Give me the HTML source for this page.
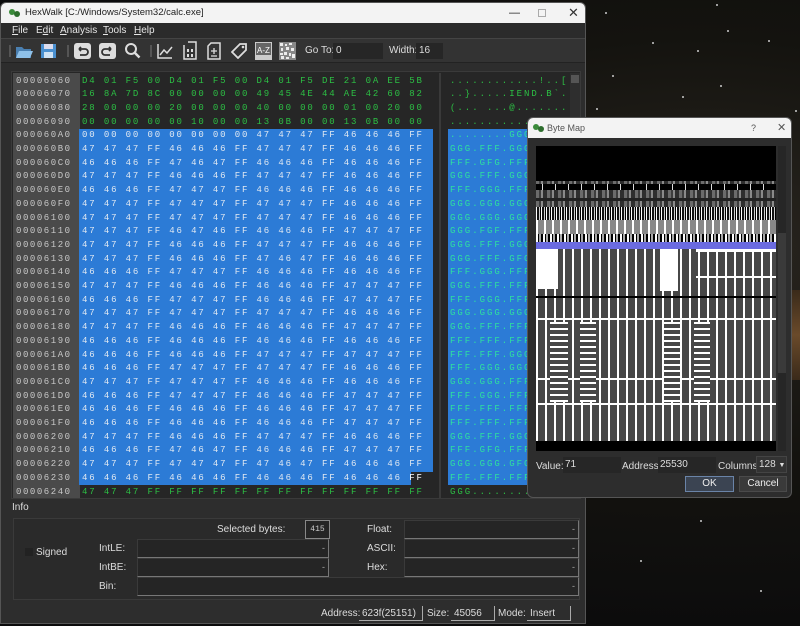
<!DOCTYPE html>
<html><head><meta charset="utf-8"><style>
*{margin:0;padding:0;box-sizing:border-box}
body{width:800px;height:626px;overflow:hidden;position:relative;background:radial-gradient(ellipse at 700px 250px,#2a2620 0%,#14130f 40%,#0b0b0c 75%);font-family:"Liberation Sans",sans-serif;font-size:10px;color:#ddd}
.a{position:absolute}
.win{left:0;top:2px;width:586px;height:622px;background:#2d2d2d;border:1px solid #555;border-radius:6px 6px 0 0;overflow:hidden}
.title{left:0;top:0;width:586px;height:20px;background:#f3f3f3;color:#222;font-size:9.5px;line-height:20px}
.mono{font-family:"Liberation Mono",monospace;font-size:9px;letter-spacing:1.87px;white-space:pre;line-height:13.7px}
.fld{background:#252525;border:1px solid #777;border-top-color:#3a3a3a;border-left-color:#3a3a3a;text-align:right;padding-right:3px;color:#aaa;line-height:16px;font-size:9px}
.lbl{color:#ddd;font-size:10px}
.star{position:absolute;width:2px;height:2px;background:#ccc;border-radius:1px}
</style></head><body>
<div class="star" style="left:716px;top:4px"></div><div class="star" style="left:605px;top:12px"></div><div class="star" style="left:652px;top:42px"></div><div class="star" style="left:697px;top:50px"></div><div class="star" style="left:727px;top:30px"></div><div class="star" style="left:768px;top:40px"></div><div class="star" style="left:612px;top:75px"></div><div class="star" style="left:682px;top:96px"></div><div class="star" style="left:720px;top:85px"></div><div class="star" style="left:795px;top:110px"></div><div class="star" style="left:596px;top:108px"></div><div class="star" style="left:760px;top:590px"></div><div class="star" style="left:640px;top:560px"></div><div class="star" style="left:700px;top:520px"></div>
<div class="a" style="left:786px;top:290px;width:14px;height:90px;background:linear-gradient(#3a2a1a,#6a4a2a,#3a2a1a)"></div>

<div class="a win">
 <div class="a title">
  <svg class="a" style="left:8px;top:5px" width="12" height="10"><circle cx="3" cy="4" r="3" fill="#3a8a3a"/><circle cx="8" cy="6" r="3" fill="#2d6d2d"/></svg>
  <span class="a" style="left:24px;top:0">HexWalk [C:/Windows/System32/calc.exe]</span>
  <span class="a" style="left:508px;top:0;font-size:11px">&#8212;</span>
  <span class="a" style="left:537px;top:6px;width:8px;height:8px;border:1px solid #aaa"></span>
  <span class="a" style="left:567px;top:0;font-size:13px;color:#333">&#10005;</span>
 </div>
 <div class="a" style="left:0;top:20px;width:586px;height:15px;background:#2b2b2b;font-size:10px;line-height:15px;color:#e6e6e6">
  <span class="a" style="left:11px"><u>F</u>ile</span><span class="a" style="left:35px">E<u>d</u>it</span><span class="a" style="left:59px"><u>A</u>nalysis</span><span class="a" style="left:102px"><u>T</u>ools</span><span class="a" style="left:133px"><u>H</u>elp</span>
 </div>
 <div class="a" style="left:0;top:35px;width:586px;height:25px;background:#333;border-top:1px solid #444;border-bottom:1px solid #222">
  <div class="a" style="left:8px;top:6px;width:2px;height:12px;background:#555"></div>
  <svg class="a" style="left:14px;top:3px" width="18" height="18"><path d="M1 5h6l2 2h7v9H1z" fill="#4a7fb0"/><path d="M4 9h14l-3 7H1z" fill="#8ec0e8"/></svg>
  <svg class="a" style="left:39px;top:4px" width="17" height="16"><rect x="1" y="1" width="15" height="14" fill="#4a90d0"/><rect x="4" y="1" width="9" height="5" fill="#dde"/><rect x="4" y="9" width="9" height="6" fill="#cfe3f5"/></svg>
  <div class="a" style="left:66px;top:6px;width:2px;height:12px;background:#555"></div>
  <svg class="a" style="left:73px;top:4px" width="17" height="16"><rect x="0" y="0" width="17" height="16" rx="3" fill="#ddd"/><path d="M5 6h6a3 3 0 0 1 0 6H6M5 6l2-2M5 6l2 2" stroke="#333" stroke-width="1.8" fill="none"/></svg>
  <svg class="a" style="left:98px;top:4px" width="17" height="16"><rect x="0" y="0" width="17" height="16" rx="3" fill="#ddd"/><path d="M12 6H6a3 3 0 0 0 0 6h5M12 6l-2-2M12 6l-2 2" stroke="#333" stroke-width="1.8" fill="none"/></svg>
  <svg class="a" style="left:123px;top:3px" width="17" height="18"><circle cx="7" cy="7" r="5" stroke="#ddd" stroke-width="2" fill="none"/><path d="M10.5 10.5l5 5" stroke="#ddd" stroke-width="2.5"/></svg>
  <div class="a" style="left:149px;top:6px;width:2px;height:12px;background:#555"></div>
  <svg class="a" style="left:156px;top:4px" width="16" height="16"><path d="M1 1v14h14" stroke="#ddd" fill="none" stroke-width="1.5"/><path d="M3 12l4-5 3 3 5-6" stroke="#ddd" fill="none" stroke-width="1.5"/></svg>
  <svg class="a" style="left:181px;top:2px" width="16" height="19"><path d="M2 4v14h12V1H6" stroke="#ddd" fill="none" stroke-width="1.5"/><rect x="5" y="8" width="2" height="3" fill="#ddd"/><rect x="9" y="8" width="2" height="3" fill="#ddd"/><rect x="5" y="13" width="2" height="3" fill="#ddd"/><rect x="9" y="13" width="2" height="3" fill="#ddd"/></svg>
  <svg class="a" style="left:206px;top:3px" width="14" height="18"><path d="M1 4v13h12V1H4z" stroke="#ddd" fill="none" stroke-width="1.5"/><path d="M7 6v6M4 9h6M4 14h6" stroke="#ddd" stroke-width="1.3"/></svg>
  <svg class="a" style="left:230px;top:4px" width="17" height="16"><path d="M9 1h6v6l-8 8-6-6z" stroke="#ddd" fill="none" stroke-width="1.8"/><circle cx="12" cy="4" r="1.3" fill="#ddd"/></svg>
  <svg class="a" style="left:254px;top:3px" width="17" height="18"><rect x="0" y="0" width="17" height="18" fill="#ccc"/><rect x="1" y="1" width="15" height="12" fill="#666"/><text x="2" y="11" font-size="8" fill="#fff" font-family="Liberation Sans">A-Z</text></svg>
  <svg class="a" style="left:278px;top:3px" width="17" height="18"><rect width="17" height="18" fill="#888"/><path d="M1 1h3v3H1zM6 2h2v2H6zM10 1h3v2h-3zM2 6h2v3H2zM7 5h3v3H7zM12 6h3v3h-3zM1 11h3v2H1zM5 10h3v3H5zM10 11h2v3h-2zM13 12h3v4h-3zM2 14h3v3H2zM7 15h3v2H7z" fill="#eee"/></svg>
  <span class="a" style="left:304px;top:6px;color:#ddd">Go To:</span>
  <div class="a" style="left:332px;top:4px;width:50px;height:16px;background:#262626;padding-left:3px;line-height:16px;color:#ddd">0</div>
  <span class="a" style="left:388px;top:6px;color:#ddd">Width:</span>
  <div class="a" style="left:415px;top:4px;width:27px;height:16px;background:#262626;padding-left:3px;line-height:16px;color:#ddd">16</div>
 </div>

 <div class="a" style="left:10px;top:68px;width:570px;height:428px;background:#262626;border:1px solid #3a3a3a"></div>
 <div class="a" style="left:12px;top:70px;width:67px;height:425px;background:#4a4a4a"></div>
 <div class="a" style="left:78px;top:126.3px;width:354px;height:356.2px;background:#2c7bd6"></div>
 <div class="a" style="left:410px;top:468.8px;width:22px;height:13.7px;background:#262626"></div>
 <div class="a" style="left:438px;top:70px;width:2px;height:425px;background:#3a3a3a"></div>
 <div class="a" style="left:447px;top:126.3px;width:82px;height:356.2px;background:#2c7bd6"></div>
 <div class="a" style="left:569px;top:70px;width:10px;height:425px;background:#2e2e2e"></div>
 <div class="a" style="left:570px;top:72px;width:8px;height:8px;background:#555"></div>

 <div class="a mono" style="left:15px;top:71.5px;color:#c8c8c8;letter-spacing:1.55px">00006060
00006070
00006080
00006090
000060A0
000060B0
000060C0
000060D0
000060E0
000060F0
00006100
00006110
00006120
00006130
00006140
00006150
00006160
00006170
00006180
00006190
000061A0
000061B0
000061C0
000061D0
000061E0
000061F0
00006200
00006210
00006220
00006230
00006240</div>
 <div class="a mono" style="left:81px;top:71.5px;color:#2cbf44">D4 01 F5 00 D4 01 F5 00 D4 01 F5 DE 21 0A EE 5B
16 8A 7D 8C 00 00 00 00 49 45 4E 44 AE 42 60 82
28 00 00 00 20 00 00 00 40 00 00 00 01 00 20 00
00 00 00 00 00 10 00 00 13 0B 00 00 13 0B 00 00</div>
 <div class="a mono" style="left:81px;top:126.3px;color:#dfe8f2">00 00 00 00 00 00 00 00 47 47 47 FF 46 46 46 FF
47 47 47 FF 46 46 46 FF 47 47 47 FF 46 46 46 FF
46 46 46 FF 47 46 47 FF 46 46 46 FF 46 46 46 FF
47 47 47 FF 46 46 46 FF 47 47 47 FF 46 46 46 FF
46 46 46 FF 47 47 47 FF 46 46 46 FF 46 46 46 FF
47 47 47 FF 47 47 47 FF 47 47 47 FF 46 46 46 FF
47 47 47 FF 47 47 47 FF 47 47 47 FF 46 46 46 FF
47 47 47 FF 46 47 46 FF 46 46 46 FF 47 47 47 FF
47 47 47 FF 46 46 46 FF 47 47 47 FF 46 46 46 FF
47 47 47 FF 46 46 46 FF 47 46 47 FF 46 46 46 FF
46 46 46 FF 47 47 47 FF 46 46 46 FF 46 46 46 FF
47 47 47 FF 46 46 46 FF 46 46 46 FF 47 47 47 FF
46 46 46 FF 47 47 47 FF 46 46 46 FF 47 47 47 FF
47 47 47 FF 47 47 47 FF 47 47 47 FF 46 46 46 FF
47 47 47 FF 46 46 46 FF 46 46 46 FF 47 47 47 FF
46 46 46 FF 46 46 46 FF 46 46 46 FF 46 46 46 FF
46 46 46 FF 46 46 46 FF 47 47 47 FF 47 47 47 FF
46 46 46 FF 47 47 47 FF 47 47 47 FF 46 46 46 FF
47 47 47 FF 47 47 47 FF 46 46 46 FF 46 46 46 FF
46 46 46 FF 47 47 47 FF 46 46 46 FF 47 47 47 FF
46 46 46 FF 46 46 46 FF 46 46 46 FF 47 47 47 FF
46 46 46 FF 46 46 46 FF 46 46 46 FF 47 47 47 FF
47 47 47 FF 46 46 46 FF 47 47 47 FF 46 46 46 FF
46 46 46 FF 47 46 47 FF 46 46 46 FF 47 47 47 FF
47 47 47 FF 47 47 47 FF 47 46 47 FF 46 46 46 FF
46 46 46 FF 46 46 46 FF 46 46 46 FF 46 46 46 <span style="color:#fff">FF</span></div>
 <div class="a mono" style="left:81px;top:482.5px;color:#2cbf44">47 47 47 FF FF FF FF FF FF FF FF FF FF FF FF FF</div>

 <div class="a mono" style="left:449px;top:71.5px;color:#2cbf44;letter-spacing:2.0px">............!..[
..}.....IEND.B`.
(... ...@.......
................</div>
 <div class="a mono" style="left:449px;top:126.3px;color:#2ee0a0;letter-spacing:2.0px">........GGG.FFF.
GGG.FFF.GGG.FFF.
FFF.GFG.FFF.FFF.
GGG.FFF.GGG.FFF.
FFF.GGG.FFF.FFF.
GGG.GGG.GGG.FFF.
GGG.GGG.GGG.FFF.
GGG.FGF.FFF.GGG.
GGG.FFF.GGG.FFF.
GGG.FFF.GFG.FFF.
FFF.GGG.FFF.FFF.
GGG.FFF.FFF.GGG.
FFF.GGG.FFF.GGG.
GGG.GGG.GGG.FFF.
GGG.FFF.FFF.GGG.
FFF.FFF.FFF.FFF.
FFF.FFF.GGG.GGG.
FFF.GGG.GGG.FFF.
GGG.GGG.FFF.FFF.
FFF.GGG.FFF.GGG.
FFF.FFF.FFF.GGG.
FFF.FFF.FFF.GGG.
GGG.FFF.GGG.FFF.
FFF.GFG.FFF.GGG.
GGG.GGG.GFG.FFF.
FFF.FFF.FFF.FFF.</div>
 <div class="a mono" style="left:449px;top:482.5px;color:#2cbf44;letter-spacing:2.0px">GGG.............</div>

 <div class="a" style="left:0;top:496px;width:586px;height:130px;background:#2d2d2d"></div>
 <span class="a lbl" style="left:11px;top:499px">Info</span>
 <div class="a" style="left:12px;top:515px;width:567px;height:82px;border:1px solid #3a3a3a;background:#2a2a2a"></div>
 <span class="a lbl" style="left:216px;top:521px">Selected bytes:</span>
 <div class="a fld" style="left:304px;top:517px;width:25px;height:19px;text-align:center;padding:0;font-family:'Liberation Mono',monospace;font-size:8px;line-height:18px;border-color:#888;color:#ccc">415</div>
 <span class="a lbl" style="left:366px;top:521px">Float:</span>
 <div class="a fld" style="left:403px;top:517px;width:175px;height:19px">-</div>
 <div class="a" style="left:24px;top:545px;width:8px;height:8px;background:#222"></div>
 <span class="a lbl" style="left:35px;top:544px">Signed</span>
 <span class="a lbl" style="left:98px;top:540px">IntLE:</span>
 <div class="a fld" style="left:136px;top:536px;width:192px;height:19px">-</div>
 <span class="a lbl" style="left:366px;top:540px">ASCII:</span>
 <div class="a fld" style="left:403px;top:536px;width:175px;height:19px">-</div>
 <span class="a lbl" style="left:98px;top:559px">IntBE:</span>
 <div class="a fld" style="left:136px;top:555px;width:192px;height:19px">-</div>
 <span class="a lbl" style="left:366px;top:559px">Hex:</span>
 <div class="a fld" style="left:403px;top:555px;width:175px;height:19px">-</div>
 <span class="a lbl" style="left:98px;top:578px">Bin:</span>
 <div class="a fld" style="left:136px;top:574px;width:442px;height:19px">-</div>

 <span class="a lbl" style="left:320px;top:605px">Address:</span>
 <div class="a" style="left:358px;top:603px;width:64px;height:15px;border-bottom:1px solid #aaa;border-right:1px solid #aaa;padding-left:3px;line-height:15px;color:#ddd">623f(25151)</div>
 <span class="a lbl" style="left:426px;top:605px">Size:</span>
 <div class="a" style="left:450px;top:603px;width:44px;height:15px;border-bottom:1px solid #aaa;border-right:1px solid #aaa;padding-left:3px;line-height:15px;color:#ddd">45056</div>
 <span class="a lbl" style="left:497px;top:605px">Mode:</span>
 <div class="a" style="left:526px;top:603px;width:44px;height:15px;border-bottom:1px solid #aaa;border-right:1px solid #aaa;padding-left:3px;line-height:15px;color:#ddd">Insert</div>
</div>

<div class="a" style="left:527px;top:117px;width:265px;height:381px;background:#2d2d2d;border:1px solid #555;border-radius:6px;overflow:hidden">
 <div class="a" style="left:0;top:0;width:265px;height:20px;background:#f3f3f3;color:#555;font-size:9px;line-height:20px">
  <svg class="a" style="left:5px;top:5px" width="12" height="10"><circle cx="3" cy="4" r="3" fill="#3a8a3a"/><circle cx="8" cy="6" r="3" fill="#2d6d2d"/></svg>
  <span class="a" style="left:19px">Byte Map</span>
  <span class="a" style="left:223px">?</span>
  <span class="a" style="left:249px;font-size:11px">&#10005;</span>
 </div>
 <div class="a" style="left:8px;top:28px;width:240px;height:305px;background:#000;overflow:hidden">
  <div class="a" style="left:0;top:35px;width:240px;height:26px;background:repeating-linear-gradient(90deg,#777 0 3px,#444 3px 5px,#999 5px 7px,#333 7px 11px),#555;opacity:.9"></div>
  <div class="a" style="left:0;top:38px;width:240px;height:6px;background:repeating-linear-gradient(90deg,#000 0 6px,#ddd 6px 7px,#000 7px 13px)"></div>
  <div class="a" style="left:0;top:52px;width:240px;height:3px;background:#222"></div>
  <div class="a" style="left:0;top:61px;width:240px;height:13px;background:repeating-linear-gradient(90deg,#fff 0 1px,#111 1px 3px,#ccc 3px 4px,#000 4px 5px)"></div>
  <div class="a" style="left:0;top:74px;width:240px;height:14px;background:repeating-linear-gradient(90deg,#fff 0 2px,#888 2px 8px)"></div>
  <div class="a" style="left:0;top:88px;width:240px;height:8px;background:repeating-linear-gradient(90deg,#fff 0 2px,#000 2px 3px,#aaa 3px 5px,#000 5px 7px)"></div>
  <div class="a" style="left:0;top:96px;width:240px;height:7px;background:#6b6be0"></div>
  <div class="a" style="left:0;top:103px;width:240px;height:192px;background:repeating-linear-gradient(90deg,#fff 0 2px,#474747 2px 9px)"></div>
  <div class="a" style="left:0;top:103px;width:22px;height:40px;background:#fff"></div>
  <div class="a" style="left:124px;top:103px;width:18px;height:42px;background:#fff"></div>
  <div class="a" style="left:160px;top:103px;width:80px;height:3px;background:#fff"></div>
  <div class="a" style="left:160px;top:130px;width:80px;height:2px;background:#fff"></div>
  <div class="a" style="left:0;top:150px;width:240px;height:2px;background:#000"></div>
  <div class="a" style="left:0;top:172px;width:240px;height:2px;background:#fff"></div>
  <div class="a" style="left:0;top:232px;width:240px;height:2px;background:#fff"></div>
  <div class="a" style="left:0;top:257px;width:240px;height:2px;background:#fff"></div>
  <div class="a" style="left:14px;top:176px;width:18px;height:80px;background:repeating-linear-gradient(#fff 0 2px,#474747 2px 6px)"></div>
  <div class="a" style="left:44px;top:176px;width:16px;height:80px;background:repeating-linear-gradient(#fff 0 2px,#474747 2px 6px)"></div>
  <div class="a" style="left:128px;top:176px;width:16px;height:80px;background:repeating-linear-gradient(#fff 0 2px,#474747 2px 6px)"></div>
  <div class="a" style="left:158px;top:176px;width:16px;height:80px;background:repeating-linear-gradient(#fff 0 2px,#474747 2px 6px)"></div>
  <div class="a" style="left:0;top:295px;width:240px;height:10px;background:#000"></div>
 </div>
 <div class="a" style="left:250px;top:28px;width:8px;height:305px;background:#262626"></div>
 <div class="a" style="left:250px;top:115px;width:8px;height:140px;background:#3a3a3a"></div>
 <span class="a lbl" style="left:8px;top:343px">Value:</span>
 <div class="a" style="left:35px;top:339px;width:58px;height:16px;background:#262626;line-height:16px;padding-left:2px;color:#ddd">71</div>
 <span class="a lbl" style="left:94px;top:343px">Address:</span>
 <div class="a" style="left:130px;top:339px;width:58px;height:16px;background:#262626;line-height:16px;padding-left:2px;color:#ddd">25530</div>
 <span class="a lbl" style="left:190px;top:343px">Columns</span>
 <div class="a" style="left:228px;top:338px;width:31px;height:17px;background:#333;border:1px solid #444;line-height:15px;padding-left:2px;color:#ddd">128 <span style="font-size:7px">&#9660;</span></div>
 <div class="a" style="left:157px;top:358px;width:49px;height:16px;background:#3b4452;border:1px solid #6a84a8;text-align:center;line-height:14px;color:#eee">OK</div>
 <div class="a" style="left:211px;top:358px;width:48px;height:16px;background:#3a3a3a;border:1px solid #4a4a4a;text-align:center;line-height:14px;color:#eee">Cancel</div>
</div>
</body></html>
